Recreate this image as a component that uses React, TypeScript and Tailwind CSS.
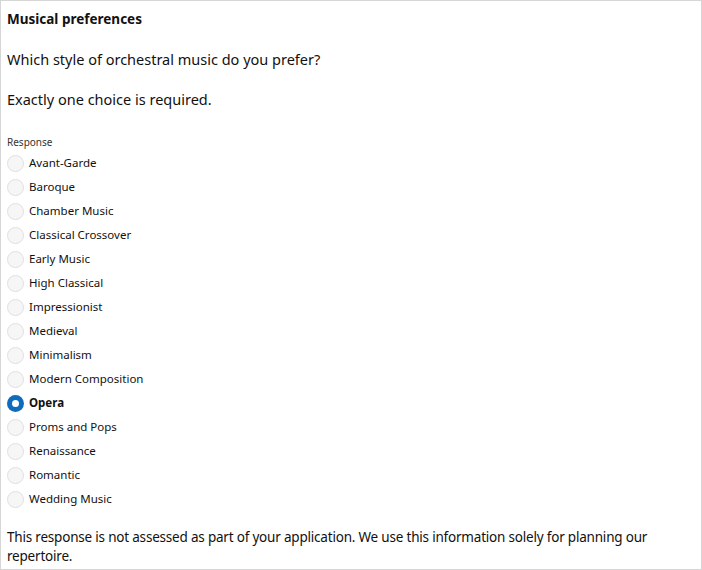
import React, { useState } from 'react';

const options = [
    'Avant-Garde',
    'Baroque',
    'Chamber Music',
    'Classical Crossover',
    'Early Music',
    'High Classical',
    'Impressionist',
    'Medieval',
    'Minimalism',
    'Modern Composition',
    'Opera',
    'Proms and Pops',
    'Renaissance',
    'Romantic',
    'Wedding Music',
];

const App: React.FC = () => {
    const [selected, setSelected] = useState('Opera');

    return (
        <div className="h-[570px] w-[702px] bg-white border border-[#d6d6d6] text-[#111] font-['Noto_Sans',sans-serif]">
            <div className="px-[6px] pt-[8px]">
                <h2 className="text-[13.5px] leading-[20px] font-bold">Musical preferences</h2>
                <p className="mt-[20px] text-[14.5px] leading-[20px]">Which style of orchestral music do you prefer?</p>
                <p className="mt-[20px] text-[14.5px] leading-[20px]">Exactly one choice is required.</p>

                <fieldset className="mt-[25px]">
                    <legend className="text-[10px] leading-[16px] text-[#333]">Response</legend>
                    <div className="mt-[1px] flex flex-col">
                        {options.map(opt => {
                            const checked = opt === selected;
                            return (
                                <label key={opt} className="flex h-[24px] items-center gap-[5px] cursor-pointer">
                                    <input
                                        type="radio"
                                        name="style"
                                        className="sr-only"
                                        checked={checked}
                                        onChange={() => setSelected(opt)}
                                    />
                                    {checked ? (
                                        <span className="flex h-[17px] w-[17px] items-center justify-center rounded-full bg-[#0f6cbd]">
                                            <span className="h-[7px] w-[7px] rounded-full bg-white" />
                                        </span>
                                    ) : (
                                        <span className="h-[17px] w-[17px] rounded-full border border-[#e0e0e0] bg-[#f6f6f6]" />
                                    )}
                                    <span className={`text-[11.5px] ${checked ? 'font-bold' : ''}`}>{opt}</span>
                                </label>
                            );
                        })}
                    </div>
                </fieldset>

                <p className="mt-[17px] text-[13.5px] leading-[19px] tracking-[-0.2px]">
                    This response is not assessed as part of your application. We use this information solely for planning our repertoire.
                </p>
            </div>
        </div>
    );
};

export default App;
